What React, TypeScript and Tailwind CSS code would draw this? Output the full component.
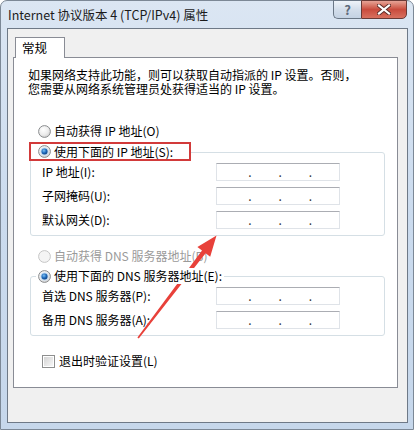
import React from "react";

function Radio({ checked = false, disabled = false }: { checked?: boolean; disabled?: boolean }) {
  return (
    <svg width="13" height="13" viewBox="0 0 13 13" className="shrink-0">
      <defs>
        <radialGradient id="rbg" cx="0.4" cy="0.35" r="0.7">
          <stop offset="0" stopColor="#ffffff" />
          <stop offset="0.6" stopColor="#ececec" />
          <stop offset="1" stopColor="#cfcfcf" />
        </radialGradient>
        <radialGradient id="rdot" cx="0.4" cy="0.35" r="0.7">
          <stop offset="0" stopColor="#7fc1f2" />
          <stop offset="0.55" stopColor="#1f6bbd" />
          <stop offset="1" stopColor="#0d3c7a" />
        </radialGradient>
      </defs>
      <circle cx="6.5" cy="6.5" r="5.9" fill={disabled ? "#f4f4f4" : "url(#rbg)"} stroke={disabled ? "#c6c6c6" : "#8a8c8e"} strokeWidth="1" />
      {checked && (
        <>
          <circle cx="6.5" cy="6.5" r="4" fill="#bcd7f0" />
          <circle cx="6.5" cy="6.5" r="3" fill="url(#rdot)" />
        </>
      )}
    </svg>
  );
}

function Checkbox() {
  return (
    <div className="w-[13px] h-[13px] border border-[#8e8f8f] bg-white p-px shrink-0">
      <div className="w-full h-full bg-gradient-to-br from-[#d4d4d4] to-[#f7f7f7]" />
    </div>
  );
}

function IpField() {
  return (
    <div className="w-[124px] h-[18px] border border-[#dfe3e8] border-t-[#abadb3] bg-white flex items-center text-[12px] leading-[12px] text-[#333]">
      <span className="w-[32px]" />
      <span className="w-[31px]">.</span>
      <span className="w-[31px]">.</span>
      <span className="w-[31px]">.</span>
    </div>
  );
}

function FieldRow({ label }: { label: string }) {
  return (
    <div className="flex items-center h-[18px]">
      <span className="w-[174px] whitespace-pre">{label}</span>
      <IpField />
    </div>
  );
}

export default function App() {
  return (
    <div className="w-[414px] h-[430px] bg-white font-['Noto_Sans_CJK_SC','Noto_Sans',sans-serif] text-[12px] text-black">
      <div className="relative w-[414px] h-[430px] flex flex-col border border-[#7c8896] rounded-t-[7px] bg-gradient-to-b from-[#dbe6f3] via-[#cbdbee] to-[#c6d7eb]">
        {/* Title bar */}
        <div className="h-[27px] flex items-start pl-[7px] pr-[6px]">
          <div className="mt-[4px] text-[12.5px] leading-[20px] text-[#1b1b1b] whitespace-pre">Internet 协议版本 4 (TCP/IPv4) 属性</div>
          <div className="ml-auto -mt-px flex h-[19px]">
            <div className="w-[28px] h-full border border-[#6a7786] border-r-0 rounded-bl-[5px] bg-gradient-to-b from-[#eef3f9] via-[#d3deeb] to-[#c4d2e3] flex items-center justify-center text-[13px] font-bold text-[#5d6a7a] leading-none">
              ?
            </div>
            <div className="w-[46px] h-full border border-[#6a3a36] rounded-br-[5px] bg-gradient-to-b from-[#e6a396] via-[#c94b3d] to-[#d8705f] flex items-center justify-center">
              <svg width="14" height="11" viewBox="0 0 14 11">
                <path d="M2 1.5 L12 9.5 M12 1.5 L2 9.5" stroke="#5a2a26" strokeWidth="4" strokeLinecap="square" />
                <path d="M2 1.5 L12 9.5 M12 1.5 L2 9.5" stroke="#ffffff" strokeWidth="2.2" strokeLinecap="square" />
              </svg>
            </div>
          </div>
        </div>

        {/* Client area */}
        <div className="ml-[6px] mr-[5px] mb-[6px] flex-1 border border-[#6e7987] bg-[#f0f0f0] flex flex-col">
          {/* Tab strip */}
          <div className="mt-[8px] ml-[7px] flex">
            <div className="relative z-10 -mb-px w-[50px] h-[21px] border border-b-0 border-[#898c95] bg-white pl-[6px] flex items-center leading-none text-[12.5px]">
              常规
            </div>
          </div>
          {/* Panel */}
          <div className="ml-[5px] w-[385px] h-[331px] border border-[#898c95] bg-white pl-[14px] pt-[10px] flex flex-col">
            <div className="leading-[14px] whitespace-pre">
              <div>如果网络支持此功能，则可以获取自动指派的 IP 设置。否则，</div>
              <div>您需要从网络系统管理员处获得适当的 IP 设置。</div>
            </div>

            <div className="mt-[27px] ml-[10px] h-[16px] flex items-center gap-[3px]">
              <Radio />
              <span className="whitespace-pre">自动获得 IP 地址(O)</span>
            </div>

            <div className="relative z-10 mt-[3px] ml-px w-[162px] h-[19px] border-2 border-[#d23a3a] bg-white pl-[7px] flex items-center gap-[3px]">
              <Radio checked />
              <span className="whitespace-pre">使用下面的 IP 地址(S):</span>
            </div>

            <div className="-mt-[9px] ml-[2px] w-[355px] border border-[#d5dfe5] rounded-[3px] pl-[11px] pt-[10px] pb-[6px] flex flex-col gap-[6px]">
              <FieldRow label="IP 地址(I):" />
              <FieldRow label="子网掩码(U):" />
              <FieldRow label="默认网关(D):" />
            </div>

            <div className="mt-[12px] ml-[10px] h-[16px] flex items-center gap-[3px] text-[#9a9a9a]">
              <Radio disabled />
              <span className="whitespace-pre">自动获得 DNS 服务器地址(B)</span>
            </div>

            <div className="mt-[4px] ml-[8px] flex">
              <div className="relative z-10 h-[16px] bg-white pl-[2px] pr-[2px] flex items-center gap-[3px]">
                <Radio checked />
                <span className="whitespace-pre">使用下面的 DNS 服务器地址(E):</span>
              </div>
            </div>

            <div className="-mt-[8px] ml-[2px] w-[355px] border border-[#d5dfe5] rounded-[3px] pl-[11px] pt-[10px] pb-[6px] flex flex-col gap-[6px]">
              <FieldRow label="首选 DNS 服务器(P):" />
              <FieldRow label="备用 DNS 服务器(A):" />
            </div>

            <div className="mt-[18px] ml-[14px] h-[14px] flex items-center gap-[4px]">
              <Checkbox />
              <span className="whitespace-pre">退出时验证设置(L)</span>
            </div>
          </div>
        </div>

        {/* Red arrow annotation */}
        <svg className="absolute left-[-1px] top-[-1px] pointer-events-none" width="414" height="430" viewBox="0 0 414 430">
          <polygon
            points="137.4,337.4 138.8,338.6 205.6,253.2 210.2,256.8 216.5,235.5 197.4,247.0 202.0,250.6"
            fill="#e8413a"
          />
        </svg>
      </div>
    </div>
  );
}
